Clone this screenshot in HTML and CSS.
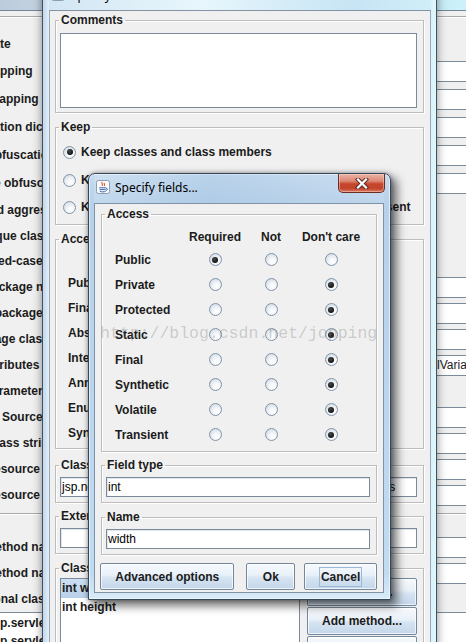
FILE: index.html
```html
<!DOCTYPE html>
<html lang="en">
<head>
<meta charset="utf-8">
<title>Specify fields...</title>
<link rel="stylesheet" href="styles.css">
</head>
<body>

<!-- background window (ProGuard obfuscation options) -->
<div class="win win-back">
  <div class="back-title"></div>
  <div class="back-client">
    <div class="back-panel">
      <div class="brow h27"><span class="blbl">Obfuscate</span></div>
      <div class="brow h28"><span class="blbl">Print mapping</span><span class="bfield"></span></div>
      <div class="brow h28"><span class="blbl">Apply mapping</span><span class="bfield"></span></div>
      <div class="brow h28"><span class="blbl">Obfuscation dictionary</span><span class="bfield"></span></div>
      <div class="brow h28"><span class="blbl">Class obfuscation dictionary</span><span class="bfield"></span></div>
      <div class="brow h28"><span class="blbl">Package obfuscation dictionary</span><span class="bfield"></span></div>
      <div class="brow"><span class="blbl">Overload aggressively</span></div>
      <div class="brow h25"><span class="blbl">Use unique class member names</span></div>
      <div class="brow"><span class="blbl">Use mixed-case class names</span></div>
      <div class="brow"><span class="blbl">Keep package names</span><span class="bfield"></span></div>
      <div class="brow"><span class="blbl">Flatten package hierarchy</span><span class="bfield"></span></div>
      <div class="brow"><span class="blbl">Repackage classes</span><span class="bfield"></span></div>
      <div class="brow"><span class="blbl">Keep attributes</span><span class="bfield">LocalVariableTable,LocalVariableTypeTable</span></div>
      <div class="brow"><span class="blbl">Keep parameter names</span></div>
      <div class="brow"><span class="blbl">Rename SourceFile attribute</span><span class="bfield"></span></div>
      <div class="brow"><span class="blbl">Adapt class strings</span><span class="bfield"></span></div>
      <div class="brow"><span class="blbl">Adapt resource file names</span><span class="bfield"></span></div>
      <div class="brow"><span class="blbl">Adapt resource file contents</span><span class="bfield"></span></div>
    </div>
    <div class="back-panel2">
      <div class="brow"><span class="blbl">Keep method names</span><span class="bfield"></span></div>
      <div class="brow"><span class="blbl">Keep method names</span><span class="bfield"></span></div>
      <div class="brow"><span class="blbl">Conditional class names</span></div>
      <div class="back-list">
        <div class="bitem">jsp.servlet.**</div>
        <div class="bitem">jsp.servlet.*Impl</div>
      </div>
    </div>
  </div>
</div>

<!-- middle dialog (Specify classes and class members) -->
<div class="win win-mid">
  <div class="mid-title">
    <svg class="jicon" width="14" height="14" viewBox="0 0 14 14"><rect x=".5" y=".5" width="13" height="13" rx="2" fill="#f7f9fc" stroke="#8d9db2"/><path d="M6.2 1.8c-1.2 1.6 1.1 2.2 -.1 4.2M8.4 2.8c-.9 1.1 .9 1.6 -.1 3.2" stroke="#e2581f" fill="none" stroke-width="1.1"/><path d="M3.2 7.8h6.8M3.6 9.6h6M3.8 11.2c1.6 .9 4.4 .9 6 0M10 8.2c1.8 0 1.8 2.2 0 2.2" stroke="#3d69ad" fill="none" stroke-width="1"/></svg>
    <span class="wtitle">Specify classes and class members...</span>
  </div>
  <div class="mid-client">
    <fieldset class="fs fs-comments">
      <legend>Comments</legend>
      <div class="textarea"></div>
    </fieldset>

    <fieldset class="fs fs-keep">
      <legend>Keep</legend>
      <div class="rrow h28"><span class="radio on"></span><span class="rtext">Keep classes and class members</span></div>
      <div class="rrow h28"><span class="radio"></span><span class="rtext">Keep class members only</span></div>
      <div class="rrow h26"><span class="radio"></span><span class="rtext">Keep classes and class members, if members are present</span></div>
    </fieldset>

    <fieldset class="fs fs-macc">
      <legend>Access</legend>
      <div class="grid macc-grid">
        <span></span><span class="hd">Required</span><span class="hd">Not</span><span class="hd">Don't care</span>
        <span class="rl">Public</span><span class="rc"><span class="radio"></span></span><span class="rc"><span class="radio"></span></span><span class="rc"><span class="radio on"></span></span>
        <span class="rl">Final</span><span class="rc"><span class="radio"></span></span><span class="rc"><span class="radio"></span></span><span class="rc"><span class="radio on"></span></span>
        <span class="rl">Abstract</span><span class="rc"><span class="radio"></span></span><span class="rc"><span class="radio"></span></span><span class="rc"><span class="radio on"></span></span>
        <span class="rl">Interface</span><span class="rc"><span class="radio"></span></span><span class="rc"><span class="radio"></span></span><span class="rc"><span class="radio on"></span></span>
        <span class="rl">Annotation</span><span class="rc"><span class="radio"></span></span><span class="rc"><span class="radio"></span></span><span class="rc"><span class="radio on"></span></span>
        <span class="rl">Enum</span><span class="rc"><span class="radio"></span></span><span class="rc"><span class="radio"></span></span><span class="rc"><span class="radio on"></span></span>
        <span class="rl">Synthetic</span><span class="rc"><span class="radio"></span></span><span class="rc"><span class="radio"></span></span><span class="rc"><span class="radio on"></span></span>
      </div>
    </fieldset>

    <fieldset class="fs fs-field fs-m1">
      <legend>Class</legend>
      <div class="tfield">jsp.net.jopping.widget.RoundProgressBarWithLabelsAndViews</div>
    </fieldset>

    <fieldset class="fs fs-field fs-m2">
      <legend>Extends/implements class</legend>
      <div class="tfield"></div>
    </fieldset>

    <fieldset class="fs fs-members">
      <legend>Class members</legend>
      <div class="members">
        <div class="mlist">
          <div class="mitem sel">int width</div>
          <div class="mitem">int height</div>
        </div>
        <div class="mbtns">
          <div class="btn mbtn">Add field...</div>
          <div class="btn mbtn">Add method...</div>
          <div class="btn mbtn">Edit...</div>
        </div>
      </div>
    </fieldset>
  </div>
</div>

<!-- top dialog -->
<div class="win win-top">
  <div class="top-title">
    <svg class="jicon" width="14" height="14" viewBox="0 0 14 14"><rect x=".5" y=".5" width="13" height="13" rx="2" fill="#f7f9fc" stroke="#8d9db2"/><path d="M6.2 1.8c-1.2 1.6 1.1 2.2 -.1 4.2M8.4 2.8c-.9 1.1 .9 1.6 -.1 3.2" stroke="#e2581f" fill="none" stroke-width="1.1"/><path d="M3.2 7.8h6.8M3.6 9.6h6M3.8 11.2c1.6 .9 4.4 .9 6 0M10 8.2c1.8 0 1.8 2.2 0 2.2" stroke="#3d69ad" fill="none" stroke-width="1"/></svg>
    <span class="wtitle">Specify fields...</span>
    <span class="close"><svg width="14" height="11" viewBox="0 0 14 11"><path d="M3 1.5l8 8M11 1.5l-8 8" stroke="#5b2c25" stroke-width="4.2" stroke-linecap="square"/><path d="M3 1.5l8 8M11 1.5l-8 8" stroke="#fff" stroke-width="2.2" stroke-linecap="square"/></svg></span>
  </div>
  <div class="top-client">
    <fieldset class="fs fs-acc">
      <legend>Access</legend>
      <div class="grid acc-grid">
        <span></span><span class="hd">Required</span><span class="hd">Not</span><span class="hd">Don't care</span>
        <span class="rl">Public</span><span class="rc"><span class="radio on"></span></span><span class="rc"><span class="radio"></span></span><span class="rc"><span class="radio"></span></span>
        <span class="rl">Private</span><span class="rc"><span class="radio"></span></span><span class="rc"><span class="radio"></span></span><span class="rc"><span class="radio on"></span></span>
        <span class="rl">Protected</span><span class="rc"><span class="radio"></span></span><span class="rc"><span class="radio"></span></span><span class="rc"><span class="radio on"></span></span>
        <span class="rl">Static</span><span class="rc"><span class="radio"></span></span><span class="rc"><span class="radio"></span></span><span class="rc"><span class="radio on"></span></span>
        <span class="rl">Final</span><span class="rc"><span class="radio"></span></span><span class="rc"><span class="radio"></span></span><span class="rc"><span class="radio on"></span></span>
        <span class="rl">Synthetic</span><span class="rc"><span class="radio"></span></span><span class="rc"><span class="radio"></span></span><span class="rc"><span class="radio on"></span></span>
        <span class="rl">Volatile</span><span class="rc"><span class="radio"></span></span><span class="rc"><span class="radio"></span></span><span class="rc"><span class="radio on"></span></span>
        <span class="rl">Transient</span><span class="rc"><span class="radio"></span></span><span class="rc"><span class="radio"></span></span><span class="rc"><span class="radio on"></span></span>
      </div>
    </fieldset>

    <fieldset class="fs fs-field fs-t1">
      <legend>Field type</legend>
      <div class="tfield">int</div>
    </fieldset>

    <fieldset class="fs fs-field fs-t2">
      <legend>Name</legend>
      <div class="tfield">width</div>
    </fieldset>

    <div class="top-btns">
      <div class="btn b-adv">Advanced options</div>
      <div class="btn b-ok">Ok</div>
      <div class="btn b-cancel"><span class="focus">Cancel</span></div>
    </div>
  </div>
</div>

<div class="watermark">http://blog.csdn.net/jopping</div>

</body>
</html>
```

FILE: styles.css
```css
* { box-sizing: border-box; }
html, body { margin: 0; padding: 0; }
body {
  width: 466px;
  height: 642px;
  overflow: hidden;
  position: relative;
  background: #7d9ab6;
  font-family: "Liberation Sans", Arial, sans-serif;
  font-size: 12px;
  color: #1b1b1b;
}

.win { position: absolute; }

/* ---------- background window ---------- */
.win-back {
  left: -80px;
  top: -22px;
  width: 600px;
  height: 720px;
  background: #f0f0f0;
}
.back-title {
  height: 32px;
  background: linear-gradient(90deg, #aebfd0 0%, #c3d2e1 20%, #bcd6ea 60%, #c9eef8 88%, #dff6fc 100%);
}
.back-client {
  border-top: 1px solid #73879b;
  padding-top: 5px;
}
.back-panel {
  border-top: 1px solid #a9a9a9;
  box-shadow: inset 0 1px 0 #fff;
  padding-top: 13px;
}
.brow {
  display: flex;
  align-items: center;
  height: 26px;
}
.brow.h25 { height: 25px; }
.brow.h27 { height: 27px; }
.brow.h28 { height: 28px; }
.blbl {
  flex: none;
  width: 489px;
  padding-left: 32px;
  font-weight: bold;
  white-space: nowrap;
  overflow: hidden;
}
.bfield {
  flex: none;
  width: 200px;
  height: 21px;
  background: #fff;
  border: 1px solid #7c8b9a;
  border-right: none;
  padding: 2px 0 0 1px;
  white-space: nowrap;
  overflow: hidden;
  line-height: 15px;
}
.back-panel2 {
  margin-top: 5px;
  border-top: 1px solid #a9a9a9;
  box-shadow: inset 0 1px 0 #fff;
  padding-top: 20px;
}
.back-list {
  margin-left: 56px;
  background: #fff;
  border: 1px solid #7c8b9a;
  padding: 1px 0 0 13px;
  height: 60px;
}
.bitem {
  height: 18px;
  line-height: 18px;
  font-weight: bold;
}

/* ---------- shared ---------- */
.fs {
  margin: 0;
  padding: 0;
  min-width: 0;
  border: 1px solid #bdbdbd;
  box-shadow: inset 1px 1px 0 #fff, 1px 1px 0 #fff;
}
.fs legend {
  margin-left: 3px;
  padding: 0 2px;
  font-weight: bold;
  line-height: 14px;
  color: #1b1b1b;
}
.tfield {
  height: 20px;
  background: #fff;
  border: 1px solid #7b8a9a;
  box-shadow: inset 1px 1px 0 #e2e7ec;
  padding: 0 0 0 1px;
  line-height: 18px;
  white-space: nowrap;
  overflow: hidden;
  color: #000;
}
.radio {
  flex: none;
  width: 13px;
  height: 13px;
  border-radius: 50%;
  border: 1px solid #8294a8;
  background: radial-gradient(circle at 60% 68%, #ffffff 0%, #f3f6f9 35%, #d3dce6 80%, #c5d0dc 100%);
  display: flex;
  align-items: center;
  justify-content: center;
}
.radio.on::after {
  content: "";
  width: 6px;
  height: 6px;
  border-radius: 50%;
  background: radial-gradient(circle at 40% 35%, #4a4a4a, #111 70%);
}
.grid {
  display: grid;
  align-items: center;
}
.grid .hd { text-align: center; font-weight: bold; white-space: nowrap; }
.grid .rl { font-weight: bold; white-space: nowrap; }
.grid .rc { display: flex; justify-content: center; }

.btn {
  display: flex;
  align-items: center;
  justify-content: center;
  border: 1px solid #74879b;
  border-radius: 2px;
  background: linear-gradient(#f7fafd 0%, #e8f0f8 45%, #d6e4f2 55%, #c3d6ea 100%);
  box-shadow: inset 0 0 0 1px rgba(255, 255, 255, 0.7);
  font-weight: bold;
  color: #1b1b1b;
  white-space: nowrap;
}

.jicon { flex: none; display: block; }

/* ---------- middle dialog ---------- */
.win-mid {
  left: 42px;
  top: -22px;
  width: 395px;
  height: 720px;
  display: flex;
  flex-direction: column;
  padding: 0 5px 0 6px;
  border-left: 1px solid #3e5165;
  border-right: 1px solid #3e5165;
  background: linear-gradient(90deg, #c2d7ea 0%, #e3f1fb 1.6%, #bcd4ea 3%, #d5e9f7 50%, #c6ecf7 97%, #e2f7fc 100%);
  box-shadow: 0 0 9px rgba(0, 0, 0, 0.45);
}
.mid-title {
  flex: none;
  height: 32px;
  display: flex;
  align-items: center;
  gap: 6px;
  padding-left: 2px;
  background: linear-gradient(90deg, #d3e6f4, #e7f6fc 40%, #c7e4f4 80%, #cfeef8);
}
.mid-title .wtitle {
  font-family: "Noto Sans", "Open Sans", sans-serif;
  font-size: 12px;
  color: #000;
  position: relative;
  top: 1px;
}
.mid-client {
  flex: 1;
  background: #f0f0f0;
  border-top: 1px solid #8393a5;
  border-left: 1px solid #9aa7b5;
  border-right: 1px solid #9aa7b5;
  padding: 2px 6px 0 5px;
}
.fs-comments { padding: 0 6px 4px 0; }
.textarea {
  margin: 6px 0 0 4px;
  height: 75px;
  background: #fff;
  border: 1px solid #7b8a9a;
}
.fs-keep { margin-top: 7px; padding: 4px 0 4px 0; }
.rrow {
  display: flex;
  align-items: center;
  gap: 5px;
  height: 26px;
  padding-left: 7px;
}
.rrow.h28 { height: 28px; }
.rtext { font-weight: bold; white-space: nowrap; }
.fs-macc { margin-top: 7px; padding: 0 0 3px 0; }
.macc-grid {
  margin-left: 12px;
  grid-template-columns: 112px 70px 42px 78px;
  grid-template-rows: 24px repeat(7, 25px);
}
.fs-field { padding: 5px 6px 5px 0; }
.fs-field .tfield { margin-left: 4px; }
.fs-m1 { margin-top: 9px; }
.fs-m2 { margin-top: 6px; }
.fs-members { margin-top: 7px; padding: 3px 6px 0 0; height: 120px; }
.members { display: flex; gap: 7px; margin-left: 4px; }
.mlist {
  width: 240px;
  height: 110px;
  background: #fff;
  border: 1px solid #7b8a9a;
}
.mitem {
  height: 19px;
  line-height: 19px;
  font-weight: bold;
  padding-left: 1px;
  white-space: nowrap;
}
.mitem.sel { background: linear-gradient(#cde0f2, #b7cfe8); }
.mbtns { flex: 1; display: flex; flex-direction: column; gap: 1px; }
.mbtn { height: 28px; }

/* ---------- top dialog ---------- */
.win-top {
  left: 88px;
  top: 173px;
  width: 303px;
  height: 427px;
  display: flex;
  flex-direction: column;
  padding: 0 6px 6px 5px;
  border: 1px solid #34475b;
  border-radius: 7px 7px 0 0;
  background: linear-gradient(180deg, #c5dbef 0%, #b7d1ea 7%, #bad5ee 50%, #c0dcf2 94%, #d8ebf8 100%);
  box-shadow: 5px 5px 10px 1px rgba(0, 0, 0, 0.55), 0 0 4px rgba(0, 0, 0, 0.35), inset 0 0 0 1px rgba(255, 255, 255, 0.55);
  z-index: 5;
}
.top-title {
  flex: none;
  height: 29px;
  display: flex;
  align-items: center;
  padding-left: 2px;
  background: linear-gradient(90deg, rgba(255,255,255,0.15), rgba(150,185,220,0.25) 40%, rgba(255,255,255,0.1));
}
.top-title .jicon { margin-top: -3px; }
.top-title .wtitle {
  margin-left: 5px;
  margin-top: -3px;
  font-family: "Noto Sans", "Open Sans", sans-serif;
  font-size: 12px;
  color: #000;
}
.close {
  align-self: flex-start;
  margin-left: auto;
  margin-right: -1px;
  width: 47px;
  height: 19px;
  display: flex;
  align-items: center;
  justify-content: center;
  border: 1px solid #6a2e25;
  border-top: none;
  border-radius: 0 0 5px 5px;
  background: linear-gradient(#eab4a8 0%, #dc8672 40%, #c6452d 55%, #c2452c 80%, #dc7a60 100%);
  box-shadow: inset 0 0 0 1px rgba(255, 220, 210, 0.45);
}
.top-client {
  flex: 1;
  background: #f0f0f0;
  border: 1px solid #8192a6;
  padding: 3px 6px 0 6px;
}
.fs-acc { padding: 5px 0 4px 0; }
.acc-grid {
  margin-left: 13px;
  grid-template-columns: 65px 70px 42px 78px;
  grid-template-rows: 21px repeat(8, 25px);
}
.fs-t1 { margin-top: 6px; }
.fs-t2 { margin-top: 7px; }
.top-btns {
  display: flex;
  margin: 8px 0 0 -1px;
}
.top-btns .btn { height: 27px; }
.b-adv { width: 135px; }
.b-ok { width: 49px; margin-left: 12px; }
.b-cancel { width: 73px; margin-left: 9px; }
.focus {
  border: 1px solid #9bb8d6;
  padding: 2px 1px;
  line-height: 14px;
}

/* ---------- watermark ---------- */
.watermark {
  position: absolute;
  left: 100px;
  top: 325px;
  z-index: 10;
  font-family: "Liberation Mono", "Courier New", monospace;
  font-size: 16.5px;
  line-height: 17px;
  color: rgba(110, 110, 110, 0.3);
  white-space: nowrap;
  pointer-events: none;
}
```
